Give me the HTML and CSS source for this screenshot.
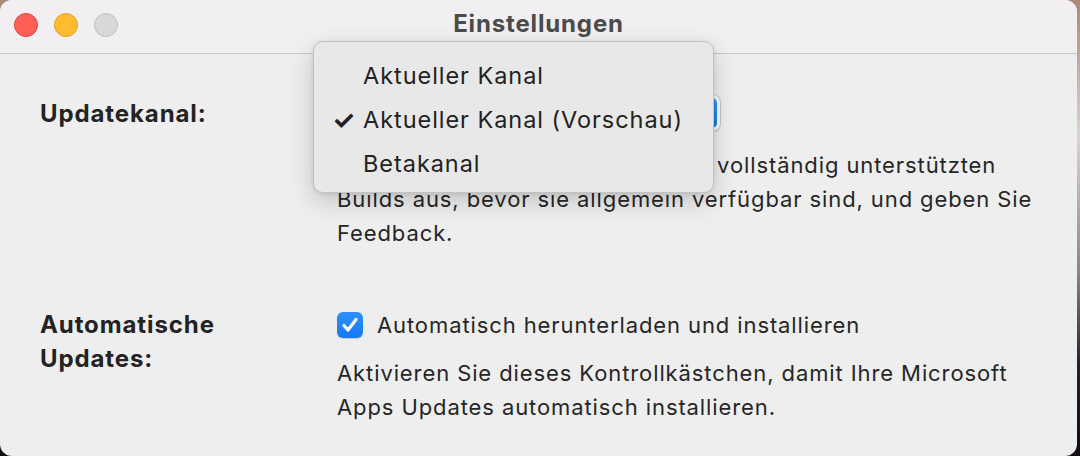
FILE: index.html
```html
<!DOCTYPE html>
<html lang="de">
<head>
  <meta charset="UTF-8" />
  <title>Einstellungen</title>
  <link rel="stylesheet" href="styles.css">
</head>
<body>
  <div class="window">
    <div class="titlebar">
      <div class="lights">
        <span class="light red"></span>
        <span class="light yellow"></span>
        <span class="light gray"></span>
      </div>
      <h1>Einstellungen</h1>
    </div>
    <div class="content">
      <div class="row first">
        <div class="label">Updatekanal:</div>
        <div class="field">
          <div class="popup-btn">
            <span class="arrows"></span>
          </div>
          <p class="desc"><span class="hidden">Testen Sie frühzeitig die neuesten </span>vollständig unterstützten<br>Builds aus, bevor sie allgemein verfügbar sind, und geben Sie<br>Feedback.</p>
        </div>
      </div>
      <div class="row">
        <div class="label">Automatische<br>Updates:</div>
        <div class="field">
          <label class="check">
            <span class="box">
              <svg viewBox="0 0 26 26" width="26" height="26"><path d="M7 13.5l4 4.5 8-10.5" fill="none" stroke="#fff" stroke-width="3.2" stroke-linecap="round" stroke-linejoin="round"/></svg>
            </span>
            Automatisch herunterladen und installieren
          </label>
          <p class="desc">Aktivieren Sie dieses Kontrollkästchen, damit Ihre Microsoft<br>Apps Updates automatisch installieren.</p>
        </div>
      </div>
    </div>

    <ul class="menu">
      <li>Aktueller Kanal</li>
      <li class="checked">Aktueller Kanal (Vorschau)</li>
      <li>Betakanal</li>
    </ul>
  </div>
</body>
</html>
```

FILE: styles.css
```css
* { margin: 0; padding: 0; box-sizing: border-box; }
html, body { height: 100%; }
body {
  font-family: Inter, 'Noto Sans', sans-serif;
  background: linear-gradient(to bottom, #a88a78 0%, #d9d4d4 30%, #8a8386 60%, #2a1e26 80%, #120c12 100%);
  color: #262626;
  overflow: hidden;
}
.window {
  position: relative;
  width: 1077px;
  height: 456px;
  background: #eeeeee;
  border-radius: 12px;
  overflow: hidden;
}
.titlebar {
  height: 54px;
  background: #f1eff1;
  border-bottom: 1px solid #c9c8c9;
  display: flex;
  align-items: center;
  justify-content: center;
}
.lights {
  position: absolute;
  left: 14px;
  top: 13px;
  display: flex;
  gap: 16px;
}
.light {
  width: 24px;
  height: 24px;
  border-radius: 50%;
  border: 1px solid rgba(0,0,0,0.12);
}
.red { background: #fe5f57; border-color: #e0443e; }
.yellow { background: #febc2e; border-color: #dea123; }
.gray { background: #d9d7d9; border-color: #c0bec0; }
.titlebar h1 {
  font-size: 24px;
  font-weight: 700;
  letter-spacing: 0.85px;
  color: #4b4b4b;
  margin-top: -6px;
}
.content {
  padding: 41px 0 0 40px;
}
.row {
  display: grid;
  grid-template-columns: 297px 1fr;
}
.row + .row { margin-top: 58px; }
.label {
  font-size: 24px;
  font-weight: 700;
  letter-spacing: 0.9px;
  line-height: 34px;
  color: #232323;
}
.first .label { padding-top: 2px; }
.popup-btn {
  width: 383px;
  height: 36px;
  border-radius: 7px;
  background: #fafafa;
  box-shadow: 0 0 0 1px rgba(0,0,0,0.12), 0 1px 2px rgba(0,0,0,0.15);
  display: flex;
  align-items: center;
  justify-content: flex-end;
}
.arrows {
  width: 20px;
  height: 30px;
  margin-right: 3px;
  border-radius: 5px;
  background: linear-gradient(#3a94fb, #1577f3);
}
.desc {
  font-size: 22px;
  letter-spacing: 0.9px;
  line-height: 34px;
  margin-top: 17px;
  color: #262626;
  white-space: nowrap;
}
.hidden { visibility: hidden; letter-spacing: 0.6px; }
.check {
  display: flex;
  align-items: center;
  gap: 14px;
  font-size: 22px;
  letter-spacing: 0.9px;
  line-height: 34px;
}
.box {
  width: 26px;
  height: 26px;
  border-radius: 6px;
  background: linear-gradient(#2f90fd, #1679f5);
  display: flex;
  box-shadow: 0 1px 1px rgba(0,0,0,0.15);
}
.row + .row .desc { margin-top: 14px; }
.menu {
  position: absolute;
  left: 313px;
  top: 41px;
  width: 401px;
  height: 152px;
  list-style: none;
  padding-top: 12px;
  background: #e9e8e8;
  border: 1px solid #c4c3c3;
  border-radius: 10px;
  box-shadow: 0 8px 24px rgba(0,0,0,0.18), 0 1px 4px rgba(0,0,0,0.1);
}
.menu li {
  height: 44px;
  line-height: 44px;
  padding-left: 49px;
  font-size: 23.5px;
  letter-spacing: 0.95px;
  color: #222;
  position: relative;
}
.menu li.checked::before {
  content: "\2713";
  position: absolute;
  left: 18px;
  font-size: 26px;
  font-weight: 700;
}
```
